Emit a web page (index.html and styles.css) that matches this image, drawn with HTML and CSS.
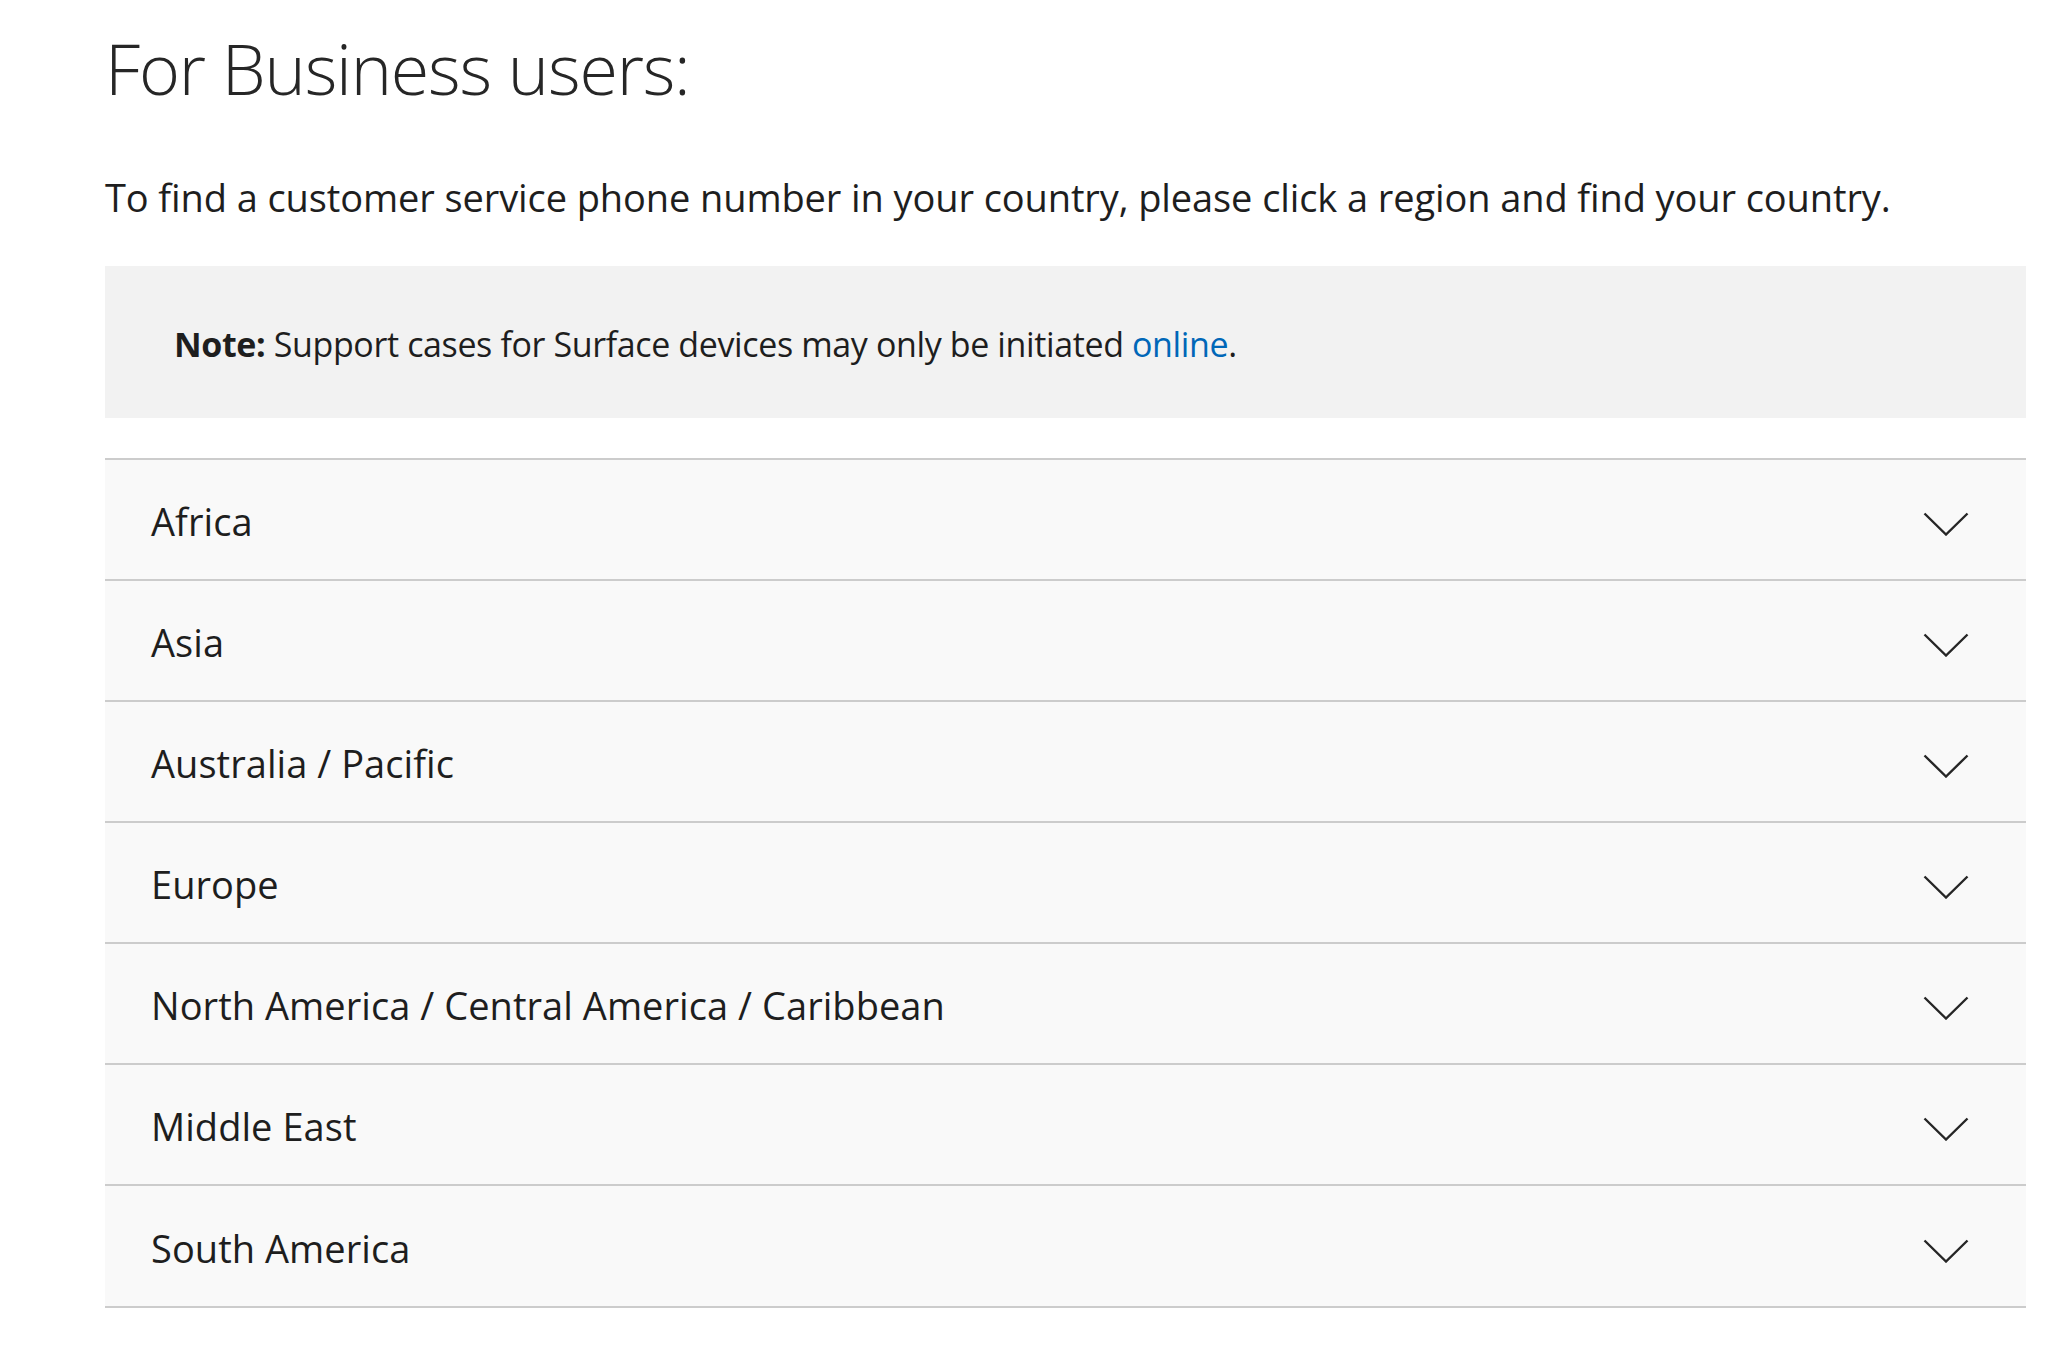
FILE: index.html
```html
<!DOCTYPE html>
<html lang="en">
<head>
<meta charset="utf-8">
<title>For Business users</title>
<link rel="stylesheet" href="styles.css">
</head>
<body>
<main class="page">
  <h1 class="title">For Business users:</h1>
  <p class="intro">To find a customer service phone number in your country, please click a region and find your country.</p>
  <div class="note"><p><b>Note:</b> Support cases for Surface devices may only be initiated <a href="#">online</a>.</p></div>
  <div class="accordion">
    <div class="row"><span class="label">Africa</span><svg class="chev" viewBox="0 0 46 24" width="46" height="24"><polyline points="1.5,1.5 23,22.5 44.5,1.5"/></svg></div>
    <div class="row"><span class="label">Asia</span><svg class="chev" viewBox="0 0 46 24" width="46" height="24"><polyline points="1.5,1.5 23,22.5 44.5,1.5"/></svg></div>
    <div class="row"><span class="label">Australia / Pacific</span><svg class="chev" viewBox="0 0 46 24" width="46" height="24"><polyline points="1.5,1.5 23,22.5 44.5,1.5"/></svg></div>
    <div class="row"><span class="label">Europe</span><svg class="chev" viewBox="0 0 46 24" width="46" height="24"><polyline points="1.5,1.5 23,22.5 44.5,1.5"/></svg></div>
    <div class="row"><span class="label">North America / Central America / Caribbean</span><svg class="chev" viewBox="0 0 46 24" width="46" height="24"><polyline points="1.5,1.5 23,22.5 44.5,1.5"/></svg></div>
    <div class="row"><span class="label">Middle East</span><svg class="chev" viewBox="0 0 46 24" width="46" height="24"><polyline points="1.5,1.5 23,22.5 44.5,1.5"/></svg></div>
    <div class="row"><span class="label">South America</span><svg class="chev" viewBox="0 0 46 24" width="46" height="24"><polyline points="1.5,1.5 23,22.5 44.5,1.5"/></svg></div>
  </div>
</main>
</body>
</html>
```
FILE: styles.css
```css
html, body {
  margin: 0;
  padding: 0;
  background: #ffffff;
}
body {
  font-family: "Segoe UI", "Open Sans", "Noto Sans", sans-serif;
  color: #1e1e1e;
}
.page {
  width: 1921px;
  margin-left: 105px;
  padding-top: 26px;
}
.title {
  margin: 0;
  font-size: 70px;
  font-weight: 300;
  line-height: 84px;
  color: #262626;
  letter-spacing: -1.2px;
}
.intro {
  margin: 63px 0 0 0;
  font-size: 38px;
  line-height: 49px;
  letter-spacing: -0.1px;
}
.note {
  margin-top: 44px;
  min-height: 152px;
  background: #f2f2f2;
  display: flex;
  align-items: center;
  padding: 0 69px;
  box-sizing: border-box;
}
.note p {
  margin: 0;
  font-size: 34px;
  line-height: 46px;
  letter-spacing: -0.38px;
  padding-top: 3px;
}
.note b {
  font-weight: 700;
}
.note a {
  color: #0067b8;
  text-decoration: none;
}
.accordion {
  margin-top: 40px;
  border-bottom: 2px solid #cccccc;
}
.row {
  display: flex;
  align-items: center;
  justify-content: space-between;
  height: 119px;
  border-top: 2px solid #cccccc;
  background: #f9f9f9;
  padding: 0 57px 0 46px;
}
.row:last-child {
  height: 120px;
}
.label {
  font-size: 38px;
  line-height: 49px;
  letter-spacing: 0.05px;
  padding-top: 4px;
}
.chev {
  margin-top: 9px;
  fill: none;
  stroke: #262626;
  stroke-width: 2.4;
}
```
